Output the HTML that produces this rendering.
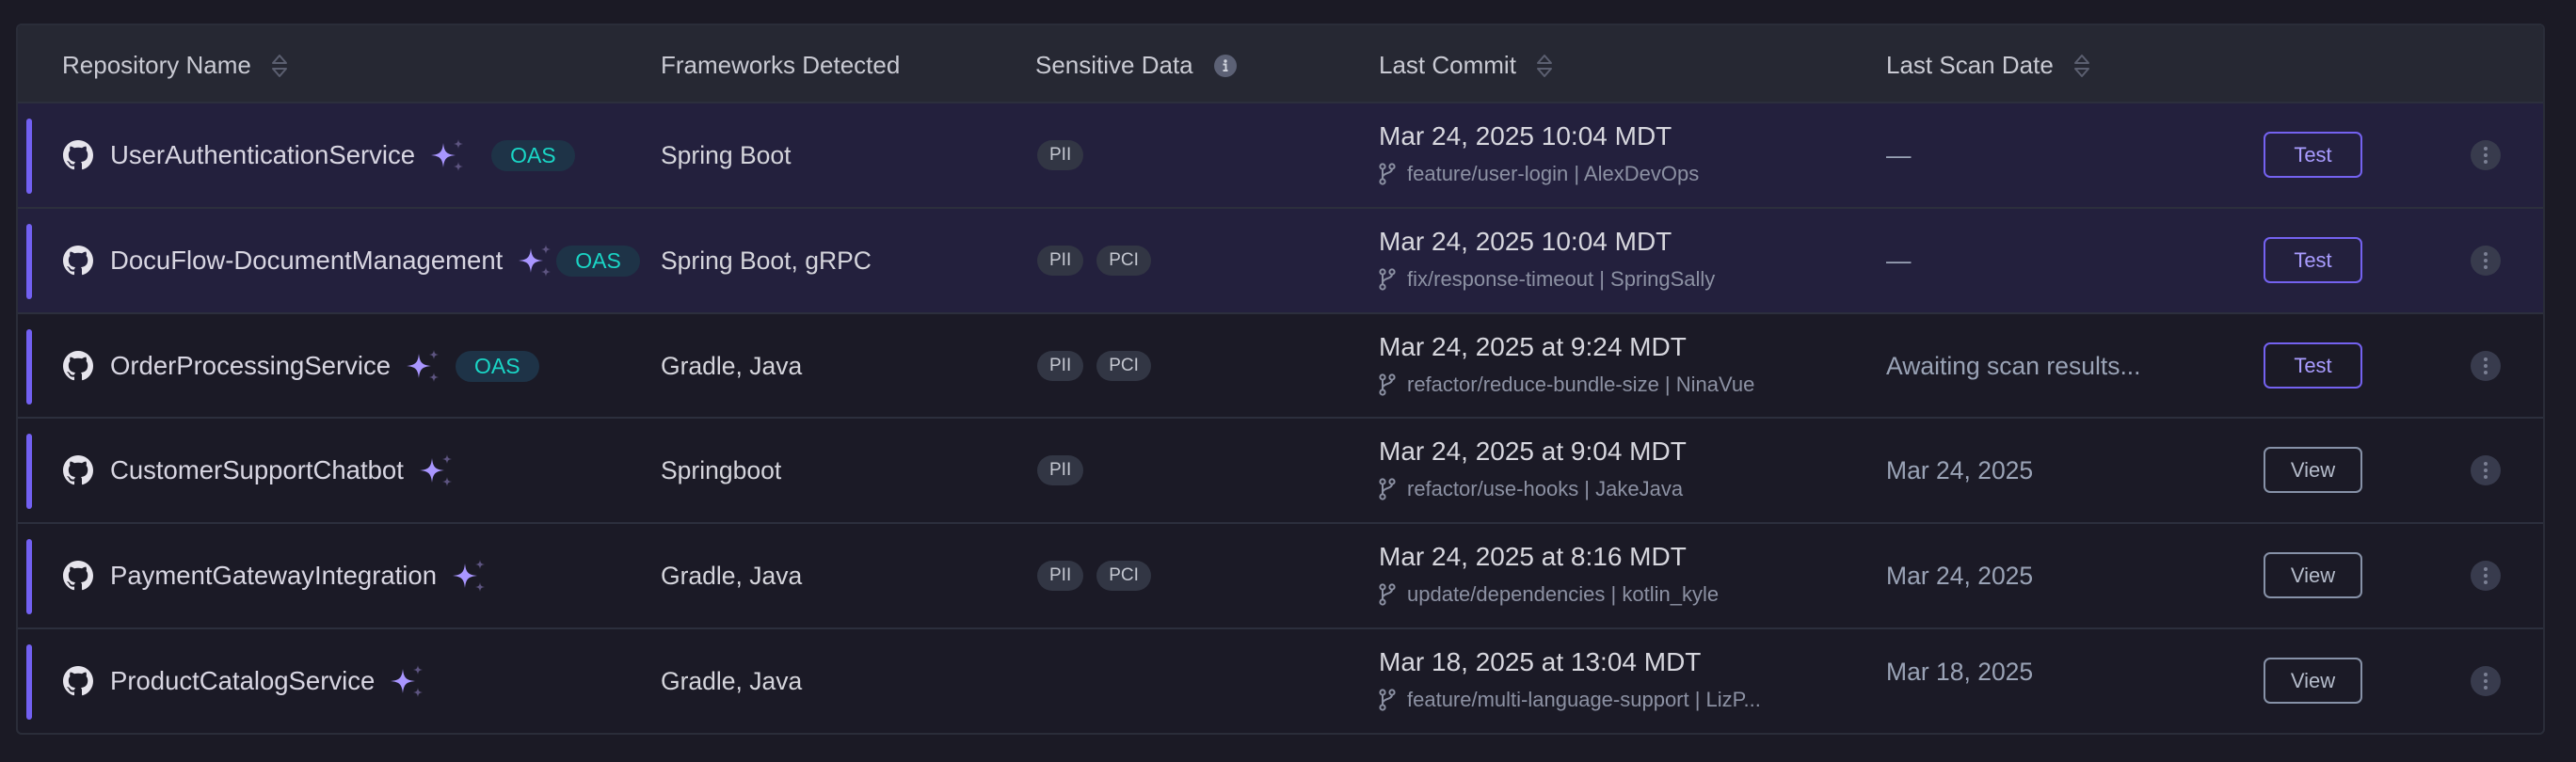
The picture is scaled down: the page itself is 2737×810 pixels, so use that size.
<!DOCTYPE html>
<html><head><meta charset="utf-8"><style>
*{margin:0;padding:0;box-sizing:border-box}
body{width:2737px;height:810px;background:#1b1a25;font-family:"Liberation Sans",sans-serif;position:relative;overflow:hidden}
.tbl{position:absolute;left:17px;top:25px;width:2687px;height:756px;border:2px solid #2a2d39;border-radius:6px;background:#1b1a26;overflow:hidden}
.hdr{position:absolute;left:0;top:0;width:100%;height:82px;background:#262833}
.h{position:absolute;top:27px;font-size:26px;color:#c9cad3;display:flex;align-items:center;white-space:nowrap}
.sort{margin-left:20px}
.row{position:absolute;left:0;width:100%;height:112px;border-top:2px solid #2c2f3d}
.row.hl{background:#23203d}
.bar{position:absolute;left:9px;top:16px;width:6px;height:80px;border-radius:3px;background:#7260f2}
.name{position:absolute;left:48px;top:0;height:110px;display:flex;align-items:center;font-size:27.5px;color:#d8d6e2;white-space:nowrap}
.name .gh{margin-right:18px}
.spark{margin-left:17px}
.oas{margin-left:22px;background:#1e3347;color:#1ad6c6;font-size:23px;border-radius:17px;height:33px;padding:0 20px;display:flex;align-items:center}
.fw{position:absolute;left:683px;top:0;height:110px;display:flex;align-items:center;font-size:26.5px;color:#d5d5dc}
.sd{position:absolute;left:1083px;top:0;height:110px;display:flex;align-items:center}
.pill{background:#323644;color:#c4c7d0;font-size:19px;border-radius:16px;height:32px;padding:0 13px;display:flex;align-items:center;margin-right:14px}
.lc{position:absolute;left:1446px;top:19px;white-space:nowrap}
.lc .d{font-size:28px;color:#d7d7de}
.lc .b{font-size:22px;color:#8c91a3;margin-top:11px;display:flex;align-items:center}
.lc .b svg{margin-right:12px}
.scan{position:absolute;left:1985px;top:0;height:110px;display:flex;align-items:center;font-size:26.5px;color:#9aa3b6}
.btn{position:absolute;left:2386px;top:30px;width:105px;height:49px;border:2px solid #7462f0;border-radius:7px;color:#a99cff;font-size:22px;display:flex;align-items:center;justify-content:center}
.btn.v{border-color:#8792a8;color:#b5bccb}
.keb{position:absolute;left:2606px;top:39px;width:32px;height:32px;border-radius:50%;background:#383b4d;display:flex;flex-direction:column;align-items:center;justify-content:center;gap:3px}
.keb i{display:block;width:4px;height:4px;border-radius:50%;background:#7b8094}
</style></head><body>
<div class="tbl">
<div class="hdr">
 <div class="h" style="left:47px">Repository Name<svg class="sort" width="20" height="28" viewBox="0 0 20 28"><path d="M3 11 L10 3 L17 11 Z M3 17 L10 25 L17 17 Z" fill="none" stroke="#5b5f70" stroke-width="2" stroke-linejoin="round"/></svg></div>
 <div class="h" style="left:683px">Frameworks Detected</div>
 <div class="h" style="left:1081px">Sensitive Data<svg style="margin-left:22px" width="24" height="24" viewBox="0 0 24 24"><circle cx="12" cy="12" r="12" fill="#5c6175"/><circle cx="12" cy="7" r="1.7" fill="#d0d3dc"/><path d="M9.5 10.5h3v6.5M9.5 17h5" stroke="#d0d3dc" stroke-width="1.9" fill="none"/></svg></div>
 <div class="h" style="left:1446px">Last Commit<svg class="sort" width="20" height="28" viewBox="0 0 20 28"><path d="M3 11 L10 3 L17 11 Z M3 17 L10 25 L17 17 Z" fill="none" stroke="#5b5f70" stroke-width="2" stroke-linejoin="round"/></svg></div>
 <div class="h" style="left:1985px">Last Scan Date<svg class="sort" width="20" height="28" viewBox="0 0 20 28"><path d="M3 11 L10 3 L17 11 Z M3 17 L10 25 L17 17 Z" fill="none" stroke="#5b5f70" stroke-width="2" stroke-linejoin="round"/></svg></div>
</div>

<svg width="0" height="0" style="position:absolute"><defs>
<symbol id="gh" viewBox="0 0 16 16"><path fill="#e6e4ec" d="M8 0C3.58 0 0 3.58 0 8c0 3.540 2.29 6.53 5.47 7.59.4.07.55-.17.55-.38 0-.19-.01-.82-.01-1.49-2.01.37-2.530-.49-2.690-.94-.09-.23-.48-.94-.82-1.130-.28-.15-.68-.52-.01-.53.63-.01 1.08.58 1.23.82.72 1.21 1.87.87 2.33.66.07-.52.28-.87.51-1.07-1.78-.2-3.64-.89-3.64-3.95 0-.87.31-1.59.82-2.150-.08-.2-.36-1.02.08-2.12 0 0 .67-.21 2.2.82.64-.18 1.32-.27 2-.27.68 0 1.36.09 2 .27 1.53-1.04 2.2-.82 2.2-.82.44 1.1.16 1.92.08 2.12.51.56.82 1.27.82 2.15 0 3.07-1.87 3.75-3.65 3.95.29.25.54.73.54 1.48 0 1.07-.01 1.93-.01 2.2 0 .21.15.46.55.38A8.013 8.013 0 0016 8c0-4.42-3.58-8-8-8z"/></symbol>
<symbol id="br" viewBox="0 0 18 24"><g fill="none" stroke="#8c91a3" stroke-width="2"><circle cx="4" cy="20" r="2.6"/><circle cx="4" cy="4" r="2.6"/><circle cx="14" cy="4" r="2.6"/><path d="M4 6.6v10.8M14 6.6c0 5-10 4-10 9"/></g></symbol>
</defs></svg>

<div class="row hl" style="top:81px"><div class="bar"></div>
 <div class="name"><svg class="gh" width="32" height="32"><use href="#gh" width="32" height="32"/></svg>UserAuthenticationService<svg class="spark" width="34" height="34" viewBox="0 0 34 34"><path fill="#a996ff" d="M13 4 C14 13 16 16 26 17 C16 18 14 21 13 30 C12 21 10 18 0 17 C10 16 12 13 13 4Z"/><path fill="#5d5480" d="M29 0 C29.5 3.5 30.5 4.5 34 5 C30.5 5.5 29.5 6.5 29 10 C28.5 6.5 27.5 5.5 24 5 C27.5 4.5 28.5 3.5 29 0Z M29 24 C29.5 27.5 30.5 28.5 34 29 C30.5 29.5 29.5 30.5 29 34 C28.5 30.5 27.5 29.5 24 29 C27.5 28.5 28.5 27.5 29 24Z"/></svg><span class="oas" style="margin-left:30px">OAS</span></div>
 <div class="fw">Spring Boot</div>
 <div class="sd"><span class="pill">PII</span></div>
 <div class="lc"><div class="d">Mar 24, 2025 10:04 MDT</div><div class="b"><svg width="18" height="24"><use href="#br" width="18" height="24"/></svg>feature/user-login | AlexDevOps</div></div>
 <div class="scan">—</div>
 <div class="btn">Test</div><div class="keb"><i></i><i></i><i></i></div>
</div>

<div class="row hl" style="top:193px"><div class="bar"></div>
 <div class="name"><svg class="gh" width="32" height="32"><use href="#gh" width="32" height="32"/></svg>DocuFlow-DocumentManagement<svg class="spark" width="34" height="34" viewBox="0 0 34 34"><path fill="#a996ff" d="M13 4 C14 13 16 16 26 17 C16 18 14 21 13 30 C12 21 10 18 0 17 C10 16 12 13 13 4Z"/><path fill="#5d5480" d="M29 0 C29.5 3.5 30.5 4.5 34 5 C30.5 5.5 29.5 6.5 29 10 C28.5 6.5 27.5 5.5 24 5 C27.5 4.5 28.5 3.5 29 0Z M29 24 C29.5 27.5 30.5 28.5 34 29 C30.5 29.5 29.5 30.5 29 34 C28.5 30.5 27.5 29.5 24 29 C27.5 28.5 28.5 27.5 29 24Z"/></svg><span class="oas" style="margin-left:6px">OAS</span></div>
 <div class="fw">Spring Boot, gRPC</div>
 <div class="sd"><span class="pill">PII</span><span class="pill">PCI</span></div>
 <div class="lc"><div class="d">Mar 24, 2025 10:04 MDT</div><div class="b"><svg width="18" height="24"><use href="#br" width="18" height="24"/></svg>fix/response-timeout | SpringSally</div></div>
 <div class="scan">—</div>
 <div class="btn">Test</div><div class="keb"><i></i><i></i><i></i></div>
</div>

<div class="row" style="top:305px"><div class="bar"></div>
 <div class="name"><svg class="gh" width="32" height="32"><use href="#gh" width="32" height="32"/></svg>OrderProcessingService<svg class="spark" width="34" height="34" viewBox="0 0 34 34"><path fill="#a996ff" d="M13 4 C14 13 16 16 26 17 C16 18 14 21 13 30 C12 21 10 18 0 17 C10 16 12 13 13 4Z"/><path fill="#5d5480" d="M29 0 C29.5 3.5 30.5 4.5 34 5 C30.5 5.5 29.5 6.5 29 10 C28.5 6.5 27.5 5.5 24 5 C27.5 4.5 28.5 3.5 29 0Z M29 24 C29.5 27.5 30.5 28.5 34 29 C30.5 29.5 29.5 30.5 29 34 C28.5 30.5 27.5 29.5 24 29 C27.5 28.5 28.5 27.5 29 24Z"/></svg><span class="oas" style="margin-left:18px">OAS</span></div>
 <div class="fw">Gradle, Java</div>
 <div class="sd"><span class="pill">PII</span><span class="pill">PCI</span></div>
 <div class="lc"><div class="d">Mar 24, 2025 at 9:24 MDT</div><div class="b"><svg width="18" height="24"><use href="#br" width="18" height="24"/></svg>refactor/reduce-bundle-size | NinaVue</div></div>
 <div class="scan">Awaiting scan results...</div>
 <div class="btn">Test</div><div class="keb"><i></i><i></i><i></i></div>
</div>

<div class="row" style="top:416px"><div class="bar"></div>
 <div class="name"><svg class="gh" width="32" height="32"><use href="#gh" width="32" height="32"/></svg>CustomerSupportChatbot<svg class="spark" width="34" height="34" viewBox="0 0 34 34"><path fill="#a996ff" d="M13 4 C14 13 16 16 26 17 C16 18 14 21 13 30 C12 21 10 18 0 17 C10 16 12 13 13 4Z"/><path fill="#5d5480" d="M29 0 C29.5 3.5 30.5 4.5 34 5 C30.5 5.5 29.5 6.5 29 10 C28.5 6.5 27.5 5.5 24 5 C27.5 4.5 28.5 3.5 29 0Z M29 24 C29.5 27.5 30.5 28.5 34 29 C30.5 29.5 29.5 30.5 29 34 C28.5 30.5 27.5 29.5 24 29 C27.5 28.5 28.5 27.5 29 24Z"/></svg></div>
 <div class="fw">Springboot</div>
 <div class="sd"><span class="pill">PII</span></div>
 <div class="lc"><div class="d">Mar 24, 2025 at 9:04 MDT</div><div class="b"><svg width="18" height="24"><use href="#br" width="18" height="24"/></svg>refactor/use-hooks | JakeJava</div></div>
 <div class="scan">Mar 24, 2025</div>
 <div class="btn v">View</div><div class="keb"><i></i><i></i><i></i></div>
</div>

<div class="row" style="top:528px"><div class="bar"></div>
 <div class="name"><svg class="gh" width="32" height="32"><use href="#gh" width="32" height="32"/></svg>PaymentGatewayIntegration<svg class="spark" width="34" height="34" viewBox="0 0 34 34"><path fill="#a996ff" d="M13 4 C14 13 16 16 26 17 C16 18 14 21 13 30 C12 21 10 18 0 17 C10 16 12 13 13 4Z"/><path fill="#5d5480" d="M29 0 C29.5 3.5 30.5 4.5 34 5 C30.5 5.5 29.5 6.5 29 10 C28.5 6.5 27.5 5.5 24 5 C27.5 4.5 28.5 3.5 29 0Z M29 24 C29.5 27.5 30.5 28.5 34 29 C30.5 29.5 29.5 30.5 29 34 C28.5 30.5 27.5 29.5 24 29 C27.5 28.5 28.5 27.5 29 24Z"/></svg></div>
 <div class="fw">Gradle, Java</div>
 <div class="sd"><span class="pill">PII</span><span class="pill">PCI</span></div>
 <div class="lc"><div class="d">Mar 24, 2025 at 8:16 MDT</div><div class="b"><svg width="18" height="24"><use href="#br" width="18" height="24"/></svg>update/dependencies | kotlin_kyle</div></div>
 <div class="scan">Mar 24, 2025</div>
 <div class="btn v">View</div><div class="keb"><i></i><i></i><i></i></div>
</div>

<div class="row" style="top:640px"><div class="bar"></div>
 <div class="name"><svg class="gh" width="32" height="32"><use href="#gh" width="32" height="32"/></svg>ProductCatalogService<svg class="spark" width="34" height="34" viewBox="0 0 34 34"><path fill="#a996ff" d="M13 4 C14 13 16 16 26 17 C16 18 14 21 13 30 C12 21 10 18 0 17 C10 16 12 13 13 4Z"/><path fill="#5d5480" d="M29 0 C29.5 3.5 30.5 4.5 34 5 C30.5 5.5 29.5 6.5 29 10 C28.5 6.5 27.5 5.5 24 5 C27.5 4.5 28.5 3.5 29 0Z M29 24 C29.5 27.5 30.5 28.5 34 29 C30.5 29.5 29.5 30.5 29 34 C28.5 30.5 27.5 29.5 24 29 C27.5 28.5 28.5 27.5 29 24Z"/></svg></div>
 <div class="fw">Gradle, Java</div>
 <div class="sd"></div>
 <div class="lc"><div class="d">Mar 18, 2025 at 13:04 MDT</div><div class="b"><svg width="18" height="24"><use href="#br" width="18" height="24"/></svg>feature/multi-language-support | LizP...</div></div>
 <div class="scan" style="top:-10px">Mar 18, 2025</div>
 <div class="btn v">View</div><div class="keb"><i></i><i></i><i></i></div>
</div>
</div>
</body></html>
